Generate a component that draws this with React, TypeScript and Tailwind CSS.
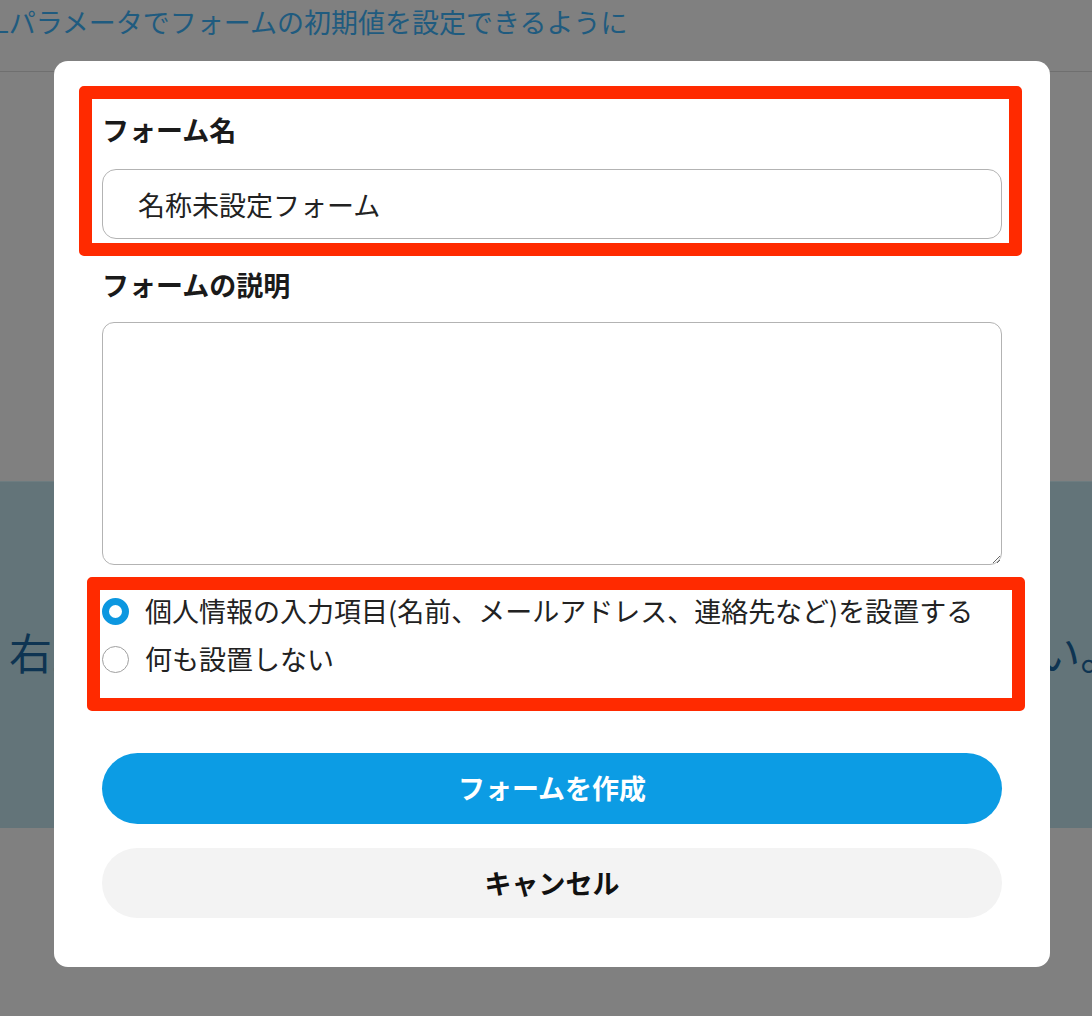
import React from "react";

const font = { fontFamily: '"Noto Sans CJK JP", "Noto Sans", sans-serif' };

export default function App() {
  return (
    <div
      className="relative w-[1092px] h-[1016px] overflow-hidden bg-[#808080] flex flex-col"
      style={font}
    >
      {/* background page (dimmed) */}
      <div className="h-[72px] shrink-0 border-b border-[#6f6f6f] flex items-start overflow-hidden">
        <div className="ml-[-6px] mt-[3px] text-[27px] leading-[38px] text-[#1f5b7f] whitespace-nowrap">
          Lパラメータでフォームの初期値を設定できるように
        </div>
      </div>
      <div className="h-[409px] shrink-0" />
      <div className="h-[347px] shrink-0 bg-[#637479] border-t border-[#6d7c80] flex items-center overflow-hidden">
        <div className="pl-[9px] mt-[-8px] text-[43px] leading-[60px] text-[#0e3452] whitespace-nowrap">
          右上の新規作成ボタンからフォームを作成してください。
        </div>
      </div>
      <div className="flex-1" />

      {/* modal */}
      <div className="absolute left-[54px] top-[61px] w-[996px] h-[906px] bg-white rounded-[14px] px-[48px] pt-[51px] pb-[49px] flex flex-col">
        <div className="h-[36px] leading-[36px] text-[27px] font-bold text-[#1a1a1a]">
          フォーム名
        </div>
        <input
          readOnly
          value="名称未設定フォーム"
          className="mt-[21px] h-[70px] w-full rounded-[14px] border border-[#b3b3b3] pl-[35px] text-[27px] text-[#222] outline-none"
        />
        <div className="mt-[28px] h-[36px] leading-[36px] text-[27px] font-bold text-[#1a1a1a]">
          フォームの説明
        </div>
        <textarea className="mt-[19px] h-[243px] w-full rounded-[12px] border border-[#b3b3b3] outline-none p-3 text-[26px]" />

        <div className="mt-[22px] flex flex-col">
          <div className="h-[48px] flex items-center">
            <span className="w-[27px] h-[27px] rounded-full border-[7px] border-[#0c97e0] bg-white shrink-0" />
            <span className="ml-[16px] text-[27px] text-[#222] whitespace-nowrap">
              個人情報の入力項目(名前、メールアドレス、連絡先など)を設置する
            </span>
          </div>
          <div className="h-[48px] flex items-center">
            <span className="w-[27px] h-[27px] rounded-full border-[1.5px] border-[#a0a0a0] bg-white shrink-0" />
            <span className="ml-[16px] text-[27px] text-[#222] whitespace-nowrap">
              何も設置しない
            </span>
          </div>
        </div>

        <button className="mt-[70px] h-[71px] w-full rounded-full bg-[#0c9ce4] text-white text-[27px] font-bold">
          フォームを作成
        </button>
        <button className="mt-[24px] h-[70px] w-full rounded-full bg-[#f3f3f3] text-[#111] text-[27px] font-bold">
          キャンセル
        </button>

        {/* annotation boxes */}
        <div className="absolute left-[25px] top-[25px] w-[943px] h-[170px] border-[13px] border-[#ff2a00] rounded-[5px] pointer-events-none" />
        <div className="absolute left-[33px] top-[516px] w-[938px] h-[134px] border-[13px] border-[#ff2a00] rounded-[5px] pointer-events-none" />
      </div>
    </div>
  );
}
